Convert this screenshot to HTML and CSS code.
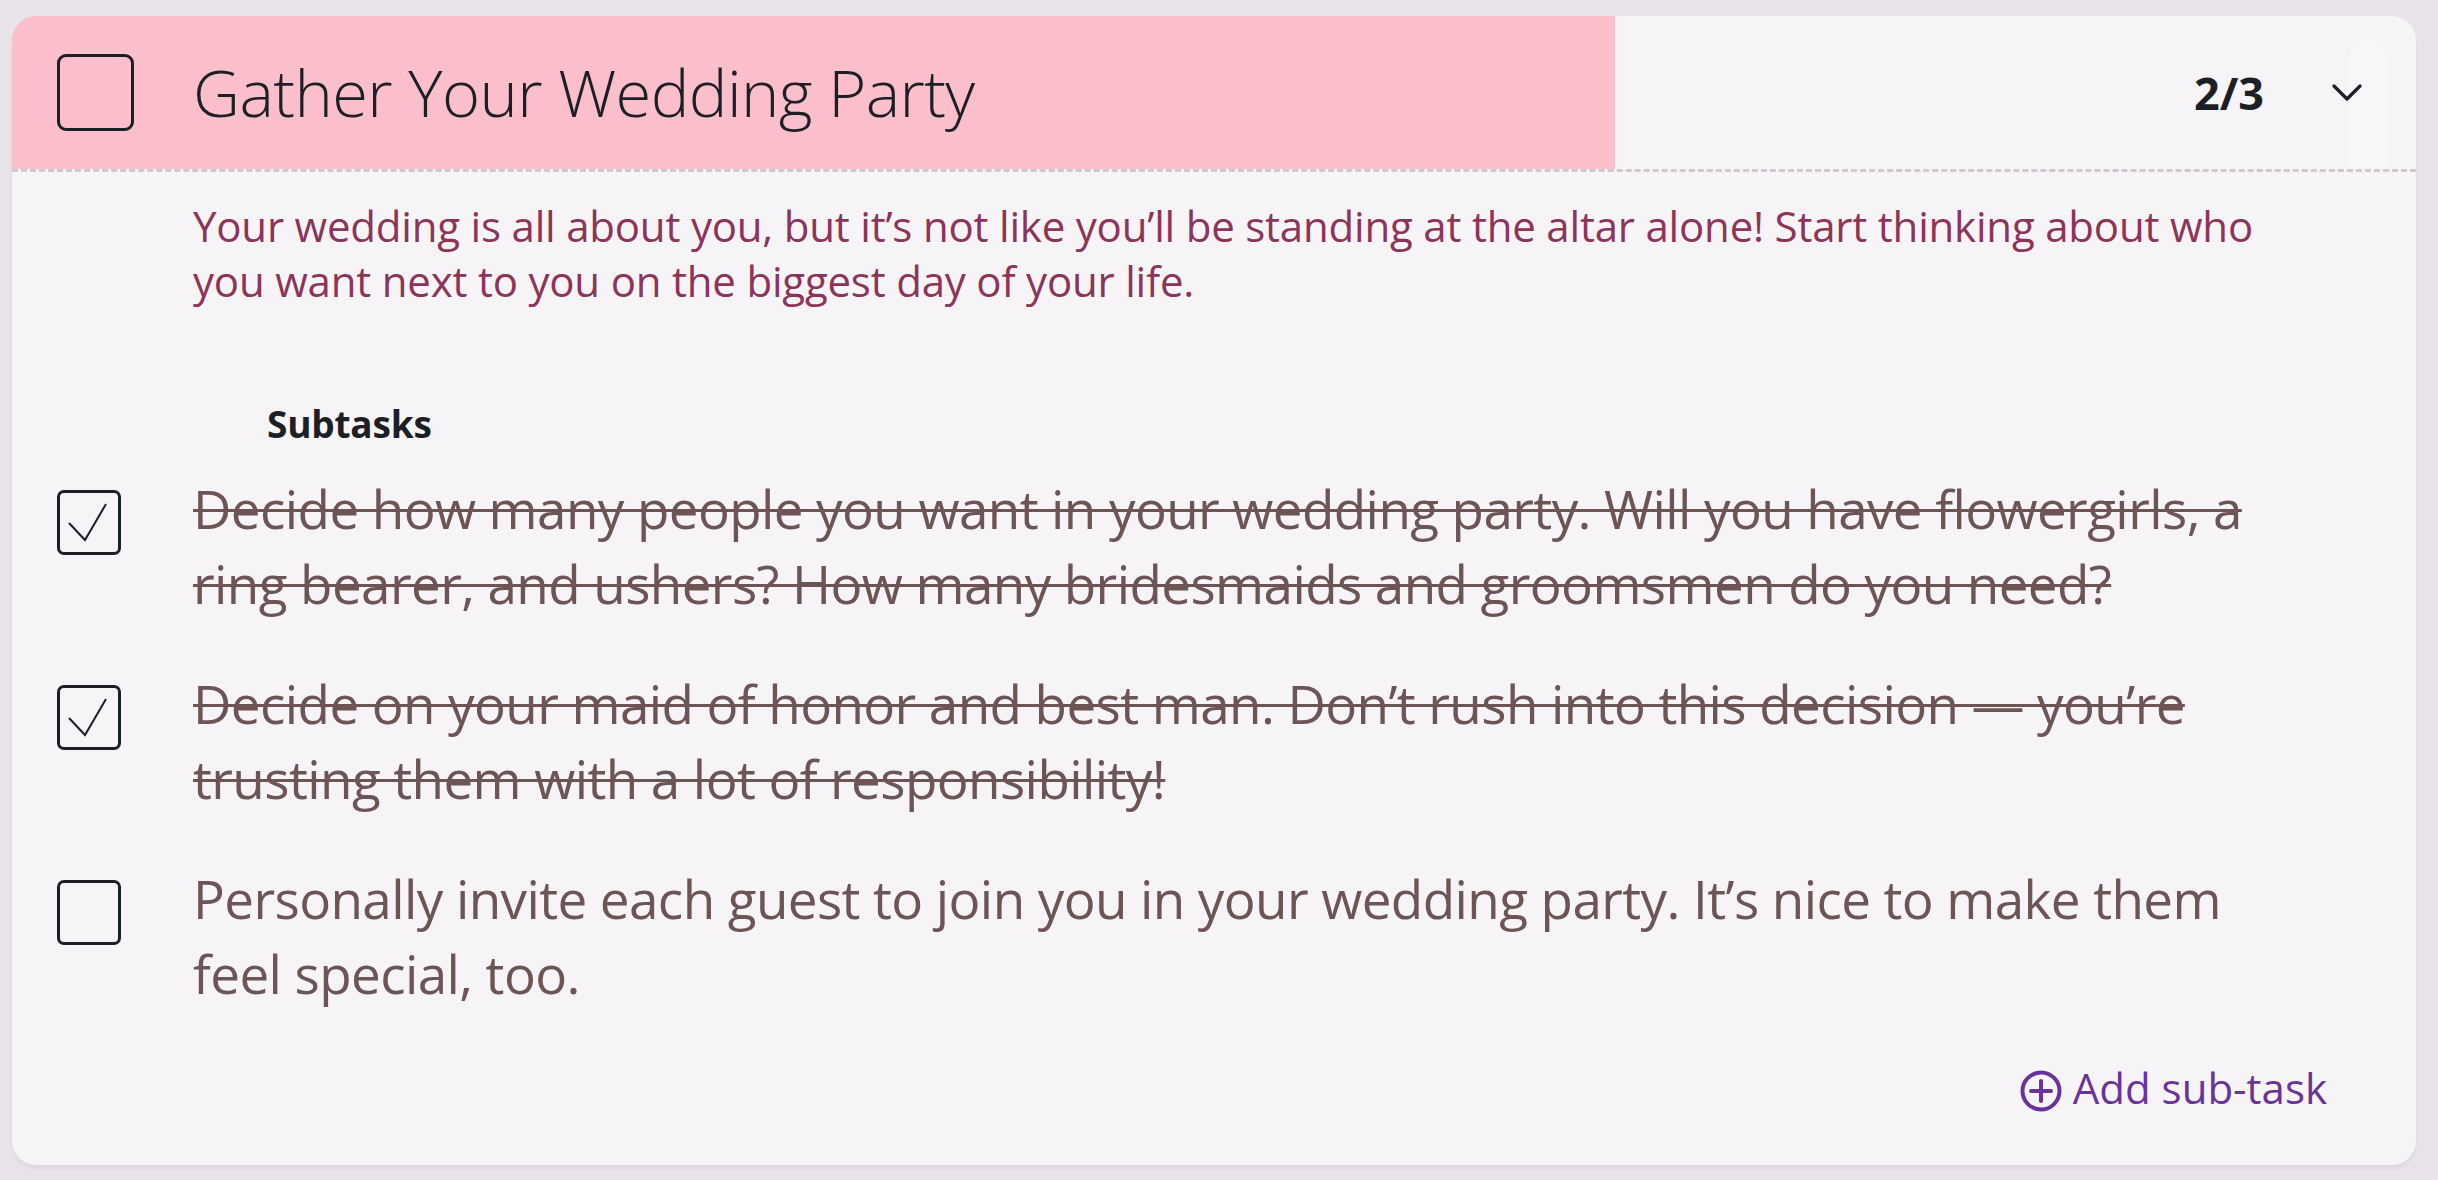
FILE: index.html
```html
<!DOCTYPE html>
<html lang="en">
<head>
<meta charset="utf-8">
<title>Gather Your Wedding Party</title>
<link rel="stylesheet" href="styles.css">
</head>
<body>
<main class="page">
  <section class="card">
    <header class="task-header" style="--progress: 66.67%">
      <span class="checkbox checkbox-lg" role="checkbox" aria-checked="false"></span>
      <h1 class="task-title">Gather Your Wedding Party</h1>
      <span class="task-count">2/3</span>
      <button class="toggle" aria-label="Collapse">
        <svg width="30" height="18" viewBox="0 0 30 18"><path d="M2 2 L15 15 L28 2" fill="none" stroke="#1c1f26" stroke-width="3.2" stroke-linecap="round" stroke-linejoin="round"/></svg>
      </button>
      <span class="ghost"></span>
    </header>
    <div class="task-body">
      <p class="task-desc">Your wedding is all about you, but it’s not like you’ll be standing at the altar alone! Start thinking about who you want next to you on the biggest day of your life.</p>
      <h2 class="subtasks-label">Subtasks</h2>
      <ul class="subtasks">
        <li class="subtask done">
          <span class="checkbox checkbox-sm" role="checkbox" aria-checked="true">
            <svg width="64" height="64" viewBox="0 0 64 64"><path d="M12 33 L28 50 L49 14" fill="none" stroke="#1c1f26" stroke-width="2"/></svg>
          </span>
          <span class="subtask-text">Decide how many people you want in your wedding party. Will you have flowergirls, a ring bearer, and ushers? How many bridesmaids and groomsmen do you need?</span>
        </li>
        <li class="subtask done">
          <span class="checkbox checkbox-sm" role="checkbox" aria-checked="true">
            <svg width="64" height="64" viewBox="0 0 64 64"><path d="M12 33 L28 50 L49 14" fill="none" stroke="#1c1f26" stroke-width="2"/></svg>
          </span>
          <span class="subtask-text">Decide on your maid of honor and best man. Don’t rush into this decision — you’re trusting them with a lot of responsibility!</span>
        </li>
        <li class="subtask">
          <span class="checkbox checkbox-sm" role="checkbox" aria-checked="false"></span>
          <span class="subtask-text">Personally invite each guest to join you in your wedding party. It’s nice to make them feel special, too.</span>
        </li>
      </ul>
      <div class="add-row">
        <button class="add-btn">
          <svg width="42" height="42" viewBox="0 0 42 42"><circle cx="21" cy="21" r="18.5" fill="none" stroke="#6a3399" stroke-width="4"/><path d="M21 11 V31 M11 21 H31" stroke="#6a3399" stroke-width="4" stroke-linecap="round"/></svg>
          <span>Add sub-task</span>
        </button>
      </div>
    </div>
  </section>
</main>
</body>
</html>
```

FILE: styles.css
```css
* { box-sizing: border-box; }

html, body {
  margin: 0;
  padding: 0;
  background: #e7e3e9;
}

body {
  font-family: "Open Sans", "Noto Sans", sans-serif;
  color: #1c1f26;
}

.page {
  padding: 16px 22px 20px 12px;
}

.card {
  background: #f6f4f7;
  border-radius: 24px;
  overflow: hidden;
  box-shadow: 0 4px 3px rgba(90, 70, 100, 0.06);
}

.task-header {
  position: relative;
  display: flex;
  align-items: center;
  height: 156px;
  padding: 0 54px 0 45px;
  background-image: linear-gradient(to right, #fbbfcb var(--progress), transparent var(--progress));
  background-clip: padding-box;
  border-bottom: 3px dashed #d0c9d0;
}

.checkbox {
  flex: none;
  display: inline-block;
  border: 3px solid #1c1f26;
  background: transparent;
}

.checkbox svg { display: block; margin: -3px; }

.checkbox-lg {
  width: 77px;
  height: 77px;
  border-radius: 9px;
}

.checkbox-sm {
  width: 64px;
  height: 65px;
  border-radius: 7px;
}

.task-title {
  flex: 1;
  margin: 0 0 0 59px;
  font-size: 65px;
  font-weight: 300;
  letter-spacing: -0.6px;
  line-height: 1;
  color: #1c1f26;
  white-space: nowrap;
}

.task-count {
  font-size: 45px;
  font-weight: 700;
  color: #1c1f26;
}

.toggle {
  margin-left: 68px;
  padding: 0;
  border: 0;
  background: none;
  display: flex;
  position: relative;
  z-index: 1;
}

.ghost {
  position: absolute;
  right: 28px;
  top: 24px;
  width: 40px;
  height: 128px;
  border-radius: 20px 22px 0 0;
  background: rgba(255, 255, 255, 0.18);
}

.task-body {
  padding: 26px 120px 53px 45px;
}

.task-desc {
  margin: 0 0 0 136px;
  font-size: 42px;
  letter-spacing: -0.2px;
  line-height: 55px;
  color: #8c3459;
}

.subtasks-label {
  margin: 96px 0 0 210px;
  font-size: 37px;
  line-height: 39px;
  font-weight: 700;
  letter-spacing: -0.2px;
  color: #1c1f26;
}

.subtasks {
  list-style: none;
  margin: 28px 0 0 0;
  padding: 0;
  display: flex;
  flex-direction: column;
  gap: 45px;
}

.subtask {
  display: flex;
  align-items: flex-start;
  gap: 72px;
}

.subtask .checkbox {
  margin-top: 19px;
}

.subtask-text {
  font-size: 53px;
  line-height: 75px;
  font-weight: 400;
  letter-spacing: -0.6px;
  color: #6d5455;
}

.subtask.done .subtask-text {
  text-decoration: line-through;
  text-decoration-thickness: 3px;
  text-decoration-color: #6d5455;
}

.add-row {
  display: flex;
  justify-content: flex-end;
  margin-top: 53px;
  margin-right: -31px;
}

.add-btn {
  display: flex;
  align-items: center;
  gap: 11px;
  padding: 0;
  border: 0;
  background: none;
  font-family: inherit;
  font-size: 42px;
  line-height: 42px;
  color: #6a3399;
}

.add-btn svg { margin-top: 6px; }
```
